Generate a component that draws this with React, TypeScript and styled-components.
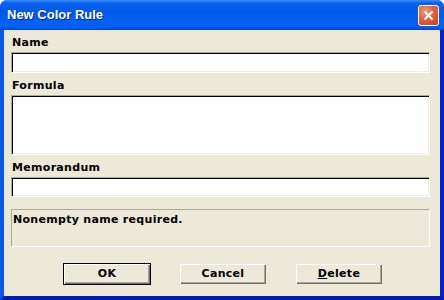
import { FC } from 'react'
import styled, { createGlobalStyle } from 'styled-components'

const GlobalStyle = createGlobalStyle`
  html, body {
    margin: 0;
    padding: 0;
    background: #ffffff;
  }
  * {
    box-sizing: border-box;
  }
`

const Window = styled.div`
  width: 444px;
  height: 300px;
  display: flex;
  flex-direction: column;
  border-radius: 7px 7px 0 0;
  overflow: hidden;
  background: #0048e0;
  font-family: 'DejaVu Sans', Tahoma, sans-serif;
  font-size: 11px;
  font-weight: bold;
  letter-spacing: 0.3px;
  color: #000;
`

const TitleBar = styled.div`
  height: 30px;
  flex-shrink: 0;
  display: flex;
  align-items: center;
  justify-content: space-between;
  padding: 0 5px 0 7px;
  background: linear-gradient(
    180deg,
    #3c8ffd 0%,
    #0a61f0 10%,
    #0058e6 40%,
    #0063f8 82%,
    #005af2 92%,
    #0042d2 100%
  );
`

const Title = styled.span`
  font-family: 'Liberation Sans', Arial, sans-serif;
  font-size: 13px;
  font-weight: bold;
  letter-spacing: 0;
  color: #ffffff;
  text-shadow: 1px 1px 0 #0a1e8a;
  padding-bottom: 1px;
`

const CloseButton = styled.div`
  width: 21px;
  height: 21px;
  border: 1px solid #ffffff;
  border-radius: 3px;
  display: flex;
  align-items: center;
  justify-content: center;
  background: radial-gradient(circle at 35% 30%, #f09a80 0%, #e2613f 45%, #c8401e 100%);
`

const Body = styled.div`
  flex: 1;
  display: flex;
  flex-direction: column;
  background: #ece9d8;
  border-left: 4px solid #0a5ae8;
  border-right: 4px solid #0022c8;
  border-bottom: 4px solid #001ab8;
  padding: 6px 6px 0 7px;
`

const Label = styled.div<{ $gap?: number }>`
  height: 13px;
  line-height: 13px;
  padding-left: 1px;
  margin-top: ${(p) => p.$gap ?? 0}px;
  margin-bottom: 3px;
`

const Field = styled.div<{ $height: number }>`
  height: ${(p) => p.$height}px;
  width: 419px;
  background: #ffffff;
  border-top: 1px solid #aca899;
  border-left: 1px solid #aca899;
  border-right: 1px solid #ffffff;
  border-bottom: 1px solid #ffffff;
  box-shadow: inset 1px 1px 0 #000000, inset -1px -1px 0 #f1efe2;
`

const Status = styled.div`
  margin-top: 12px;
  width: 419px;
  height: 38px;
  padding: 3px 1px;
  border-top: 1px solid #aca899;
  border-left: 1px solid #aca899;
  border-right: 1px solid #ffffff;
  border-bottom: 1px solid #ffffff;
  line-height: 13px;
`

const ButtonRow = styled.div`
  margin-top: 16px;
  display: flex;
  gap: 28px;
  padding-left: 52px;
`

const Button = styled.div<{ $default?: boolean }>`
  width: 88px;
  height: 22px;
  display: flex;
  align-items: center;
  justify-content: center;
  background: #ece9d8;
  border: 1px solid ${(p) => (p.$default ? '#000000' : '#ece9d8')};
  box-shadow: inset 1px 1px 0 #ffffff, inset -1px -1px 0 #716f64, inset -2px -2px 0 #aca899;
  padding-bottom: 1px;
`

const Accel = styled.span`
  text-decoration: underline;
`

export default function App() {
  return (
    <>
      <GlobalStyle />
      <Window>
        <TitleBar>
          <Title>New Color Rule</Title>
          <CloseButton>
            <svg width="11" height="11" viewBox="0 0 11 11">
              <path d="M1.5 1.5 L9.5 9.5 M9.5 1.5 L1.5 9.5" stroke="#ffffff" strokeWidth="2" />
            </svg>
          </CloseButton>
        </TitleBar>
        <Body>
          <Label>Name</Label>
          <Field $height={21} />
          <Label $gap={6}>Formula</Label>
          <Field $height={60} />
          <Label $gap={6}>Memorandum</Label>
          <Field $height={20} />
          <Status>Nonempty name required.</Status>
          <ButtonRow>
            <Button $default>OK</Button>
            <Button>Cancel</Button>
            <Button>
              <span>
                <Accel>D</Accel>elete
              </span>
            </Button>
          </ButtonRow>
        </Body>
      </Window>
    </>
  )
}
